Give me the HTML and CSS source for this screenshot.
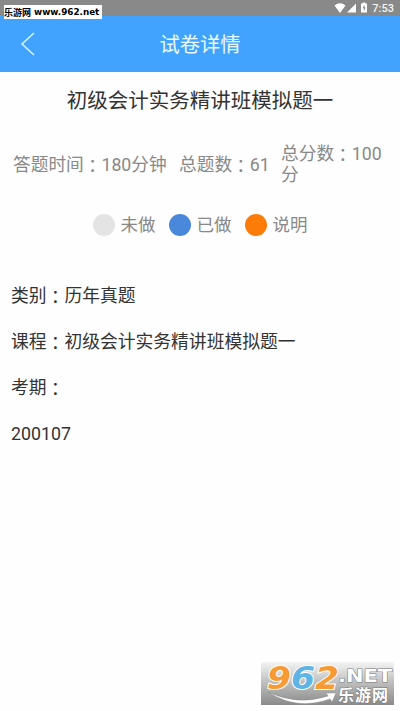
FILE: index.html
```
<!DOCTYPE html>
<html lang="zh-CN">
<head>
    <meta charset="UTF-8">
    <title>试卷详情</title>
    <link rel="stylesheet" href="styles.css">
</head>
<body>
    <div class="status">
        <svg class="status-icons" width="36" height="12" viewBox="0 0 36 12">
            <path d="M0.5 3.5Q6 -1 11.5 3.5L6 11Z"/>
            <path d="M22 1.5V10.5H13Z"/>
            <path d="M27 1.5H28.7V0.5H31.3V1.5H33V10.5H27Z"/>
            <path class="bolt" d="M30.6 2.8L28.5 6.3H29.8V9L31.7 5.5H30.6Z"/>
        </svg>
        <span>7:53</span>
    </div>
    <div class="header">
        <svg class="back" width="16" height="26" viewBox="0 0 16 26">
            <path d="M14 2L2 13L14 24"/>
        </svg>
        <span>试卷详情</span>
    </div>
    <h1>初级会计实务精讲班模拟题一</h1>
    <div class="info">
        <div class="time">答题时间<span class="colon" lang="zh-TW">：</span>180分钟</div>
        <div class="count">总题数<span class="colon" lang="zh-TW">：</span>61</div>
        <div class="score">总分数<span class="colon" lang="zh-TW">：</span>100分</div>
    </div>
    <div class="legend">
        <div class="item"><i class="dot"></i>未做</div>
        <div class="item"><i class="dot done"></i>已做</div>
        <div class="item"><i class="dot note"></i>说明</div>
    </div>
    <div class="details">
        <p>类别<span class="colon" lang="zh-TW">：</span>历年真题</p>
        <p>课程<span class="colon" lang="zh-TW">：</span>初级会计实务精讲班模拟题一</p>
        <p>考期<span class="colon" lang="zh-TW">：</span></p>
        <p>200107</p>
    </div>

    <div class="site-tag"><span>乐游网</span><b>www.962.net</b></div>
    <svg class="site-logo" width="133" height="43" viewBox="0 0 133 43">
        <defs>
            <linearGradient id="logoBg" x1="0" y1="0" x2="0" y2="1">
                <stop offset="0" stop-color="#f4f4f4"/>
                <stop offset="0.5" stop-color="#bcbcbc"/>
                <stop offset="1" stop-color="#8a8a8a"/>
            </linearGradient>
        </defs>
        <rect width="133" height="43" fill="url(#logoBg)"/>
        <text class="digits" x="6" y="27" textLength="72" lengthAdjust="spacingAndGlyphs"><tspan fill="#f79a34">9</tspan><tspan fill="#5fb4e6">6</tspan><tspan fill="#f79a34">2</tspan></text>
        <path class="swoosh" d="M7 30Q37 44 67 34L65 31L75 31L71 40L69 37Q36 49 7 30Z"/>
        <text class="net" x="77" y="20" textLength="54" lengthAdjust="spacingAndGlyphs">.NET</text>
        <text class="cn" x="77" y="39" textLength="50">乐游网</text>
    </svg>
</body>
</html>
```

FILE: styles.css
```
body {
    margin: 0;
    height: 711px;
    overflow: hidden;
    background: #fefefe;
    font-family: Roboto, "Noto Sans CJK SC", sans-serif;
    color: #333;
}

.status {
    display: flex;
    align-items: center;
    justify-content: flex-end;
    box-sizing: border-box;
    height: 16px;
    padding-right: 6px;
    background: #898989;
    color: #f4f4f4;
    font-size: 11px;
    font-weight: 500;
}

.status-icons {
    margin-right: 2px;
    fill: #fff;
}

.status-icons .bolt {
    fill: #898989;
}

.header {
    display: grid;
    grid-template-columns: 40px 1fr 40px;
    align-items: center;
    height: 56px;
    background: #41a3fe;
    color: #e9fcff;
    font-size: 20.3px;
    line-height: 28px;
    text-align: center;
}

.header span {
    padding-top: 1px;
}

.back {
    margin-left: 20px;
    fill: none;
    stroke: #d5f6ff;
    stroke-width: 1.5;
}

h1 {
    margin: 14px 0 0;
    font-size: 20.5px;
    font-weight: normal;
    line-height: 30px;
    text-align: center;
}

.info {
    display: flex;
    align-items: center;
    height: 42px;
    margin-top: 28px;
    padding-left: 13px;
    color: #888;
    font-size: 17.7px;
    line-height: 21px;
}

.time {
    width: 166px;
}

.count {
    width: 102px;
}

.score {
    width: 106px;
}

.colon {
    font-family: "Noto Sans CJK TC", sans-serif;
    line-height: 0;
    vertical-align: -2px;
}

.legend {
    display: flex;
    justify-content: center;
    gap: 13px;
    height: 24px;
    margin-top: 27px;
    color: #888;
    font-size: 17.5px;
    line-height: 24px;
}

.item {
    display: flex;
    align-items: center;
}

.dot {
    width: 22px;
    height: 22px;
    margin-right: 6px;
    border-radius: 50%;
    background: #e4e4e4;
}

.done {
    background: #4a88dc;
}

.note {
    background: #fd7b08;
}

.details {
    margin: 36px 0 0 11px;
    font-size: 17.8px;
}

.details p {
    height: 46px;
    margin: 0;
    line-height: 46px;
}

.site-tag {
    position: absolute;
    left: 4px;
    top: 5px;
    display: flex;
    align-items: center;
    gap: 3px;
    width: 98px;
    height: 14px;
    background: #fff;
    color: #000;
    font: bold 9px "Noto Sans CJK SC", sans-serif;
    white-space: nowrap;
}

.site-tag b {
    font: bold 8.8px "DejaVu Sans", sans-serif;
}

.site-logo {
    position: absolute;
    left: 261px;
    top: 662px;
    overflow: visible;
}

.digits {
    font: italic bold 32px "DejaVu Sans", sans-serif;
    stroke: #fff;
    stroke-width: 2px;
    paint-order: stroke;
}

.swoosh {
    fill: #fff;
    stroke: #888;
    stroke-width: 0.5;
}

.net {
    font: bold 18px "DejaVu Sans", sans-serif;
    fill: #fff;
    stroke: #777;
    stroke-width: 1px;
    paint-order: stroke;
}

.cn {
    font: bold 16px "Noto Sans CJK SC", sans-serif;
    fill: #fff;
    stroke: #777;
    stroke-width: 1px;
    paint-order: stroke;
}
```
